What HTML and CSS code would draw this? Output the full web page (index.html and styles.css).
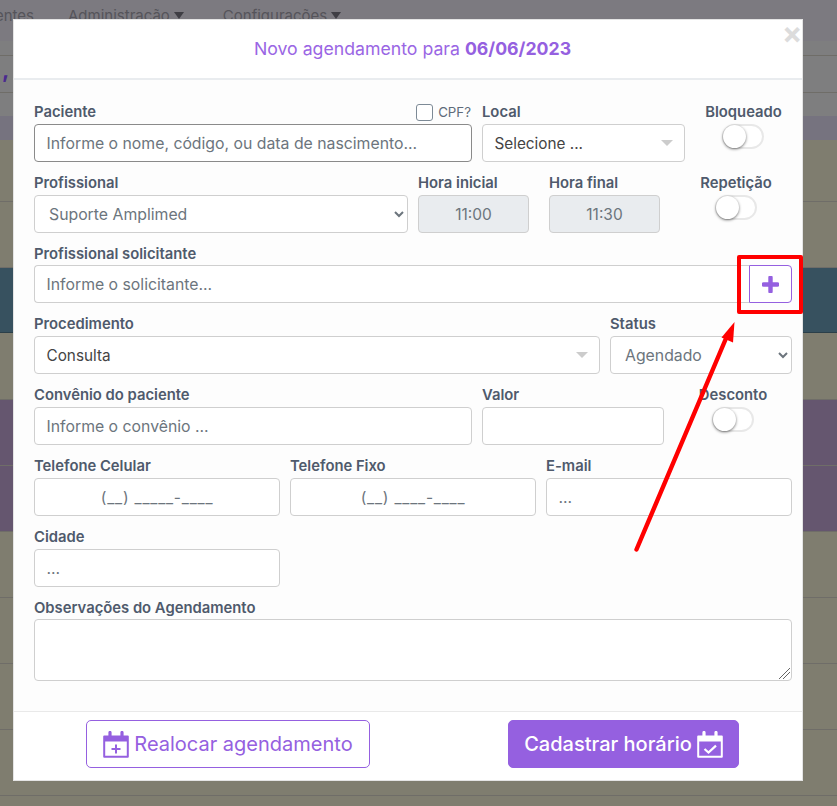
FILE: index.html
```html
<!DOCTYPE html>
<html lang="pt-BR">
<head>
  <meta charset="UTF-8">
  <title>Novo agendamento</title>
  <link rel="stylesheet" href="styles.css">
</head>
<body>
  <div class="page">
    <div class="band band-nav">
      <div class="nav">
        <span class="nav-cut">Pacientes</span>
        <span class="nav-item">Administração<i class="caret-down"></i></span>
        <span class="nav-item">Configurações<i class="caret-down"></i></span>
      </div>
    </div>
    <div class="band band-a"></div>
    <div class="band band-b"><span class="comma">,</span></div>
    <div class="band band-c"></div>
    <div class="band band-d"></div>
    <div class="band band-olive band-62"></div>
    <div class="band band-olive band-66"></div>
    <div class="band band-teal band-65"></div>
    <div class="band band-olive band-67"></div>
    <div class="band band-purple band-66"></div>
    <div class="band band-purple band-66"></div>
    <div class="band band-olive band-66"></div>
    <div class="band band-olive band-66"></div>
    <div class="band band-olive band-66"></div>
    <div class="band band-olive band-66"></div>
    <div class="band band-olive band-10"></div>
  </div>

  <div class="modal">
    <div class="modal-header">
      <h1>Novo agendamento para <b>06/06/2023</b></h1>
      <span class="close">×</span>
    </div>

    <div class="modal-body">
      <div class="row row-1">
        <div class="field">
          <div class="label label-split">
            <span>Paciente</span>
            <span class="cpf"><input type="checkbox" class="check"> CPF?</span>
          </div>
          <input class="input input-strong" placeholder="Informe o nome, código, ou data de nascimento...">
        </div>
        <div class="field">
          <div class="label">Local</div>
          <div class="input fake-select dark">Selecione ...<i class="caret-grey"></i></div>
        </div>
        <div class="field field-center">
          <div class="label">Bloqueado</div>
          <div class="toggle"><span class="knob"></span></div>
        </div>
      </div>

      <div class="row row-2">
        <div class="field">
          <div class="label">Profissional</div>
          <select class="input select"><option>Suporte Amplimed</option></select>
        </div>
        <div class="field">
          <div class="label">Hora inicial</div>
          <input class="input input-time" value="11:00" disabled>
        </div>
        <div class="field">
          <div class="label">Hora final</div>
          <input class="input input-time" value="11:30" disabled>
        </div>
        <div class="field field-center">
          <div class="label">Repetição</div>
          <div class="toggle"><span class="knob"></span></div>
        </div>
      </div>

      <div class="row">
        <div class="field">
          <div class="label label-tight">Profissional solicitante</div>
          <div class="input-group">
            <input class="input" placeholder="Informe o solicitante...">
            <button class="btn-add">
              <svg width="17" height="17" viewBox="0 0 17 17"><path d="M8.5 1.5v14M1.5 8.5h14" stroke="#9560e0" stroke-width="4.4" stroke-linecap="round" fill="none"/></svg>
            </button>
          </div>
        </div>
      </div>

      <div class="row row-4">
        <div class="field">
          <div class="label">Procedimento</div>
          <div class="input fake-select dark">Consulta<i class="caret-grey"></i></div>
        </div>
        <div class="field">
          <div class="label">Status</div>
          <select class="input select"><option>Agendado</option></select>
        </div>
      </div>

      <div class="row row-5">
        <div class="field">
          <div class="label">Convênio do paciente</div>
          <input class="input" placeholder="Informe o convênio ...">
        </div>
        <div class="field">
          <div class="label">Valor</div>
          <input class="input">
        </div>
        <div class="field field-center">
          <div class="label">Desconto</div>
          <div class="toggle"><span class="knob"></span></div>
        </div>
      </div>

      <div class="row row-3col">
        <div class="field">
          <div class="label">Telefone Celular</div>
          <input class="input input-mask" value="(__) _____-____">
        </div>
        <div class="field">
          <div class="label">Telefone Fixo</div>
          <input class="input input-mask" value="(__) ____-____">
        </div>
        <div class="field">
          <div class="label">E-mail</div>
          <input class="input" placeholder="...">
        </div>
      </div>

      <div class="row row-3col">
        <div class="field">
          <div class="label">Cidade</div>
          <input class="input" placeholder="...">
        </div>
      </div>

      <div class="row">
        <div class="field">
          <div class="label label-tight">Observações do Agendamento</div>
          <textarea class="input textarea"></textarea>
        </div>
      </div>
    </div>

    <div class="modal-footer">
      <button class="btn btn-outline">
        <svg width="26" height="27" viewBox="0 0 26 27" fill="none">
          <path d="M1.2 5.5h23.6v20.3H1.2z" stroke="#9560e0" stroke-width="2" stroke-linejoin="round"/>
          <path d="M1 5h24v5.5H1z" fill="#9560e0"/>
          <path d="M7 1.500v5M19 1.500v5" stroke="#9560e0" stroke-width="3.2" stroke-linecap="round"/>
          <path d="M13 13.500v9M8.500 18h9" stroke="#9560e0" stroke-width="2"/>
        </svg>
        Realocar agendamento
      </button>
      <button class="btn btn-solid">
        Cadastrar horário
        <svg width="26" height="27" viewBox="0 0 26 27" fill="none">
          <path d="M1.2 5.5h23.6v20.3H1.2z" stroke="#fff" stroke-width="2" stroke-linejoin="round"/>
          <path d="M1 5h24v5.5H1z" fill="#fff"/>
          <path d="M7 1.500v5M19 1.500v5" stroke="#fff" stroke-width="3.2" stroke-linecap="round"/>
          <path d="M7.500 18l4 3.600 7.500-7" stroke="#fff" stroke-width="2.2"/>
        </svg>
      </button>
    </div>
  </div>

  <div class="red-box"></div>
  <svg class="red-arrow" width="837" height="806" viewBox="0 0 837 806" fill="none">
    <path d="M636.5 549.5L727 336" stroke="#ff0000" stroke-width="4.4" stroke-linecap="round"/>
    <path d="M734.5 322L721.5 337.500L733 342.500z" fill="#ff0000"/>
  </svg>
</body>
</html>
```

FILE: styles.css
```css
* { box-sizing: border-box; }
body { font-family: 'Inter', 'Open Sans', sans-serif; margin: 0; background: #7f7d6f; overflow: hidden; height: 806px; }

/* page behind the backdrop */
.page { height: 806px; overflow: hidden; }
.band { border-bottom: 1px solid #6f6d68; }
.band-nav { height: 41px; background: #7c7a80; border: 0; }
.band-a { height: 15px; background: #7e7e7f; }
.band-b { height: 37px; background: #7e7e7f; display: flex; align-items: flex-end; padding: 0 0 11px 2px; }
.band-c { height: 23px; background: #7e7e7f; border: 0; }
.band-d { height: 24px; background: #76737f; border: 0; }
.band-olive { background: #7f7d6f; }
.band-teal { background: #37515f; border-bottom-color: #2b3f49; }
.band-purple { background: #65566f; }
.band-62 { height: 62px; }
.band-65 { height: 65px; }
.band-66 { height: 66px; }
.band-67 { height: 67px; }
.band-10 { height: 10px; border: 0; }
.comma { color: #4b2a8f; font-weight: 700; font-size: 22px; line-height: 22px; }
.nav { display: flex; align-items: center; height: 30px; color: #55545a; font-size: 15px; }
.nav-cut { width: 34px; margin-right: 34px; display: flex; justify-content: flex-end; overflow: hidden; }
.nav-item { margin-right: 39px; display: flex; align-items: center; }
.caret-down { width: 0; height: 0; margin-left: 4px; border-left: 5px solid transparent; border-right: 5px solid transparent; border-top: 7px solid #3f3e44; }

/* modal */
.modal {
  position: absolute;
  left: 13px;
  top: 19px;
  width: 790px;
  height: 762px;
  background: #fff;
  border: 1px solid #e4e4e4;
  display: flex;
  flex-direction: column;
}
.modal-header {
  height: 60px;
  border-bottom: 2px solid #e9ecef;
  padding: 0 0 2px 9px;
  display: flex;
  align-items: center;
  justify-content: center;
}
.modal-header h1 { margin: 0; font-size: 17.7px; font-weight: 400; color: #9a66e4; }
.modal-header b { font-weight: 700; color: #9560e0; }
.close { position: absolute; right: -2px; top: -2px; width: 22px; font-size: 30px; line-height: 30px; font-weight: 700; color: #dcdcdc; }

.modal-body { flex: 1; background: #fdfdfd; padding: 21px 10px 0 20px; display: flex; flex-direction: column; gap: 10px; }
.row { display: grid; column-gap: 10px; grid-template-columns: 1fr; }
.row-1 { grid-template-columns: 438px 203px 1fr; }
.row-2 { grid-template-columns: 374px 111px 121px 1fr; }
.row-2 .field:nth-child(3) { margin-left: 10px; }
.row-2 .field:nth-child(4) { margin-left: 10px; }
.row-4 { grid-template-columns: 566px 182px; }
.row-5 { grid-template-columns: 438px 182px 1fr; }
.row-3col { grid-template-columns: 246px 246px 246px; }

.field { display: flex; flex-direction: column; min-width: 0; }
.field-center { align-items: center; }
.label { height: 22px; margin-bottom: 1px; line-height: 22px; font-size: 14.8px; font-weight: 600; color: #4f5a6c; white-space: nowrap; }
.label-tight { margin-bottom: 0; }
.label-split { display: flex; justify-content: space-between; align-items: center; }
.cpf { display: flex; align-items: center; gap: 5px; margin-right: 1px; font-size: 13.3px; font-weight: 400; color: #5f6b7a; }
.check { appearance: none; width: 17px; height: 17px; margin: 0; background: #fff; border: 1px solid #7d8a96; border-radius: 3px; }

.input {
  width: 100%;
  height: 38px;
  padding: 0 11.5px;
  background: #fff;
  border: 1px solid #cfcfcf;
  border-radius: 4px;
  font-family: inherit;
  font-size: 15.8px;
  color: #6c757d;
  outline: none;
}
.input::placeholder { color: #6c757d; opacity: 1; }
.input-strong { border-color: #8a8a8a; }
.input-time { background: #e9ecef; text-align: center; color: #6c757d; font-size: 15.5px; }
.input-mask { text-align: center; color: #6c757d; font-size: 15.5px; letter-spacing: .8px; }
.select { padding-left: 10px; font-size: 15.8px; }
.dark { color: #444; font-size: 15.3px; }
.fake-select { display: flex; align-items: center; justify-content: space-between; }
.caret-grey { width: 0; height: 0; border-left: 6px solid transparent; border-right: 6px solid transparent; border-top: 6px solid #cccccc; }
.textarea { height: 62px; display: block; padding: 6px 12px; }
.textarea::-webkit-resizer {
  background: linear-gradient(135deg, transparent 52%, #666 52%, #666 57%, transparent 57%, transparent 68%, #666 68%, #666 73%, transparent 73%) no-repeat right 1px bottom 1px / 12px 12px;
}

.input-group { display: flex; }
.input-group .input { flex: 1; border-radius: 4px 0 0 4px; border-right: 0; }
.btn-add {
  width: 43px;
  height: 38px;
  padding: 0;
  background: #fff;
  border: 1px solid #9560e0;
  border-radius: 0 4px 4px 0;
  display: flex;
  align-items: center;
  justify-content: center;
}

.toggle { width: 42px; height: 25px; background: #fff; border: 2px solid #e8e8e8; border-radius: 13px; position: relative; }
.knob { position: absolute; left: -1px; top: -1px; width: 23px; height: 23px; background: #fff; border-radius: 50%; box-shadow: 0 1px 3px rgba(0, 0, 0, .55); }
.row-1 .toggle { margin-right: 1px; }

.modal-footer { height: 69px; border-top: 1px solid #e9e9e9; padding: 8px 0 0 72px; display: flex; align-items: flex-start; gap: 138px; }
.btn {
  height: 48px;
  border-radius: 5px;
  font-family: inherit;
  font-size: 20px;
  display: flex;
  align-items: center;
  justify-content: center;
  gap: 5px;
}
.btn-outline { width: 284px; background: #fff; border: 1px solid #9560e0; color: #9560e0; }
.btn-solid { width: 231px; background: #9560e0; border: 1px solid #9560e0; color: #fff; font-weight: 500; }

/* annotation drawn on top of the screenshot */
.red-box { position: absolute; left: 737px; top: 255px; width: 66px; height: 59px; border: 4px solid #ff0000; border-radius: 2px; }
.red-arrow { position: absolute; left: 0; top: 0; pointer-events: none; }
```
